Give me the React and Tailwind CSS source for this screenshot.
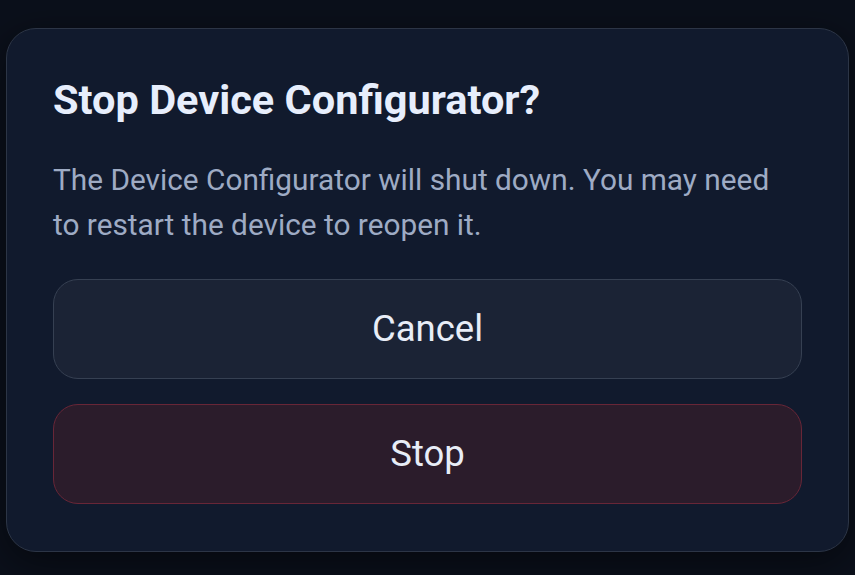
export default function App() {
  return (
    <div
      className="min-h-screen w-full bg-[#0b101b] px-[6px] pt-[28px] pb-[24px]"
      style={{ fontFamily: 'Roboto, "Noto Sans", sans-serif' }}
    >
      <div className="rounded-[30px] border border-[#2c3546] bg-[#111a2d] px-[46px] pt-[45px] pb-[47px] shadow-[0_10px_40px_rgba(0,0,0,0.5)]">
        <h2 className="text-[41.5px] font-bold leading-[1.25] text-[#e7eefc]">
          Stop Device Configurator?
        </h2>
        <p className="mt-[31px] max-w-[740px] text-[29.8px] leading-[45px] text-[#9eabc4]">
          The Device Configurator will shut down. You may need to restart the device to reopen it.
        </p>
        <div className="mt-[32px] flex flex-col gap-[25px]">
          <button className="flex h-[100px] items-center justify-center rounded-[25px] border border-[#364052] bg-[#1b2335] text-[36.5px] text-[#e8edf7]">
            Cancel
          </button>
          <button className="flex h-[100px] items-center justify-center rounded-[25px] border border-[#682637] bg-[#2b1c2b] text-[36.5px] text-[#e8edf7]">
            Stop
          </button>
        </div>
      </div>
    </div>
  );
}
